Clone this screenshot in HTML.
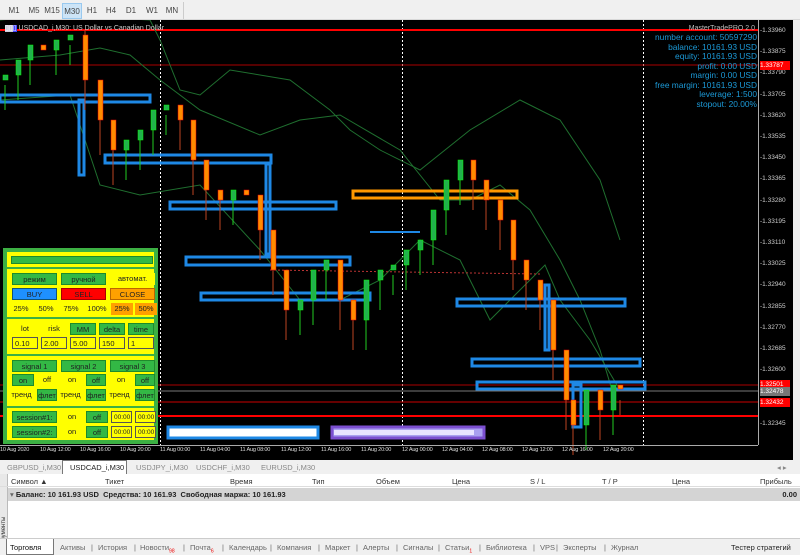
<!DOCTYPE html>
<html><head><meta charset="utf-8"><style>
*{margin:0;padding:0;box-sizing:border-box}
body{width:800px;height:555px;overflow:hidden;background:#f0f0f0;font-family:"Liberation Sans",sans-serif;position:relative}
.tb{position:absolute;left:0;top:0;width:800px;height:20px;background:#f0f0f0;border-bottom:1px solid #d8d8d8}
.tb span{position:absolute;top:3px;height:16px;font-size:8px;color:#444;line-height:16px;text-align:center;width:20px}
.tb .on{background:#cce4f7;border:1px solid #99c9ef}
.chart{position:absolute;left:0;top:20px;width:793px;height:440px;background:#000}
.p{position:absolute;font-size:8px;line-height:9px}
.btn{position:absolute;font-size:7.5px;text-align:center;color:#222;line-height:11px;height:12px}
.g{background:#33b845;border:1px solid #1e8a2c}
.y{background:#ffff00}
.inp{background:#ffff00;border:1px solid #555;text-align:left;padding-left:2px}
.ab{position:absolute;top:0}
.tl span{position:absolute;top:0}
</style></head><body>
<div class="tb">
<span style="left:4px">M1</span><span style="left:24px">M5</span><span style="left:42px">M15</span><span class="on" style="left:62px">M30</span><span style="left:82px">H1</span><span style="left:101px">H4</span><span style="left:121px">D1</span><span style="left:142px">W1</span><span style="left:162px">MN</span>
<div style="position:absolute;left:183px;top:2px;width:1px;height:17px;background:#ccc"></div>
</div>
<div class="chart">
<svg width="793" height="440" style="position:absolute;left:0;top:0">
<g stroke="#fff" stroke-dasharray="2,2" stroke-width="1"><line x1="160.5" y1="0" x2="160.5" y2="425"/><line x1="402.5" y1="0" x2="402.5" y2="425"/><line x1="643.5" y1="0" x2="643.5" y2="425"/></g>
<line x1="0" y1="10" x2="758" y2="10" stroke="#f00" stroke-width="2"/>
<line x1="0" y1="45" x2="758" y2="45" stroke="#a00" stroke-width="1"/>
<line x1="0" y1="365" x2="758" y2="365" stroke="#a00"/>
<line x1="0" y1="371" x2="758" y2="371" stroke="#777"/>
<line x1="0" y1="382" x2="758" y2="382" stroke="#c00"/>
<line x1="0" y1="396" x2="758" y2="396" stroke="#f00" stroke-width="2"/>
<g fill="none" stroke="#1f6f2f" stroke-width="1">
<polyline points="0,0 60,-5 150,0 160,20 180,70 200,75 230,50 290,60 330,90 350,110 380,130 420,150 470,110 520,80 560,100 600,160 620,220"/>
<polyline points="0,40 60,35 100,28 130,35 160,60 200,90 260,115 300,100 340,95 400,130 440,180 470,180 500,165 530,190 560,240 580,280 600,330 615,380"/>
<polyline points="0,80 70,75 100,165 140,175 200,165 260,230 300,280 340,280 380,260 420,220 460,240 490,300 520,270 545,245 560,280 590,320 620,370"/>
</g>
<line x1="270" y1="250" x2="540" y2="254" stroke="#b33" stroke-dasharray="2,2"/>
<g fill="none" stroke="#1e88e5" stroke-width="3">
<rect x="0" y="75" width="150" height="7"/><rect x="79" y="80" width="5" height="75"/>
<rect x="105" y="135" width="166" height="8"/><rect x="170" y="182" width="166" height="7"/>
<rect x="186" y="237" width="164" height="8"/><rect x="201" y="273" width="169" height="7"/>
<rect x="457" y="279" width="168" height="7"/><rect x="472" y="339" width="168" height="7"/>
<rect x="477" y="362" width="168" height="7"/><rect x="573" y="365" width="8" height="42"/>
<rect x="266" y="144" width="4" height="90"/><rect x="545" y="265" width="4" height="65"/>
</g>
<line x1="370" y1="212" x2="420" y2="212" stroke="#1e88e5" stroke-width="2"/>
<rect x="353" y="171" width="164" height="7" fill="none" stroke="#ff9800" stroke-width="3"/>
<g stroke="#b42" stroke-width="1"><path d="M85 10V90M100 60V135M113 110V165M180 95V130M193 110V175M206 150V200M220 180V210M260 185V240M273 220V275M286 260V320M340 250V310M353 290V330M473 150V190M486 170V210M500 190V230M513 210V270M526 250V290M540 270V310M553 290V360M566 340V410M573 390V435M600 380V420M620 380V395"/></g>
<g stroke="#2c2" stroke-width="1"><path d="M5 65V90M18 50V80M30 35V65M56 30V55M70 25V45M126 130V160M140 120V150M153 100V135M166 95V115M233 180V205M300 290V315M313 260V305M326 250V280M366 270V330M380 260V290M393 255V275M406 240V270M420 230V255M433 200V245M446 170V215M460 150V185M586 375V430M613 375V415"/></g>
<g fill="#22b14c" stroke="#0f0" stroke-width=".5">
<rect x="3" y="55" width="5" height="5"/><rect x="16" y="40" width="5" height="15"/><rect x="28" y="25" width="5" height="15"/><rect x="54" y="20" width="5" height="10"/><rect x="68" y="15" width="5" height="5"/>
<rect x="124" y="120" width="5" height="10"/><rect x="138" y="110" width="5" height="10"/><rect x="151" y="90" width="5" height="20"/><rect x="164" y="85" width="5" height="5"/><rect x="231" y="170" width="5" height="10"/>
<rect x="298" y="280" width="5" height="10"/><rect x="311" y="250" width="5" height="30"/><rect x="324" y="240" width="5" height="10"/><rect x="364" y="260" width="5" height="40"/><rect x="378" y="250" width="5" height="10"/><rect x="391" y="245" width="5" height="5"/><rect x="404" y="230" width="5" height="15"/><rect x="418" y="220" width="5" height="10"/><rect x="431" y="190" width="5" height="30"/><rect x="444" y="160" width="5" height="30"/><rect x="458" y="140" width="5" height="20"/>
<rect x="584" y="370" width="5" height="35"/><rect x="611" y="365" width="5" height="25"/>
</g>
<g fill="#ff8c00" stroke="#e00" stroke-width=".5">
<rect x="41" y="25" width="5" height="5"/><rect x="83" y="15" width="5" height="45"/><rect x="98" y="60" width="5" height="40"/><rect x="111" y="100" width="5" height="30"/>
<rect x="178" y="85" width="5" height="15"/><rect x="191" y="100" width="5" height="40"/><rect x="204" y="140" width="5" height="30"/><rect x="218" y="170" width="5" height="10"/><rect x="244" y="170" width="5" height="5"/><rect x="258" y="175" width="5" height="35"/><rect x="271" y="210" width="5" height="40"/><rect x="284" y="250" width="5" height="40"/>
<rect x="338" y="240" width="5" height="40"/><rect x="351" y="280" width="5" height="20"/>
<rect x="471" y="140" width="5" height="20"/><rect x="484" y="160" width="5" height="20"/><rect x="498" y="180" width="5" height="20"/><rect x="511" y="200" width="5" height="40"/><rect x="524" y="240" width="5" height="20"/><rect x="538" y="260" width="5" height="20"/><rect x="551" y="280" width="5" height="50"/><rect x="564" y="330" width="5" height="50"/><rect x="571" y="380" width="5" height="25"/><rect x="598" y="370" width="5" height="20"/><rect x="618" y="365" width="5" height="4"/>
</g>
<rect x="168" y="407" width="150" height="11" fill="#fff" stroke="#1e88e5" stroke-width="3"/>
<rect x="332" y="407" width="152" height="11" fill="#a9a0f0" stroke="#7b4fd0" stroke-width="3"/>
<rect x="334" y="410" width="140" height="5" fill="#e8e4ff"/>
<line x1="758.5" y1="0" x2="758.5" y2="425" stroke="#aaa"/>
<line x1="0" y1="425.5" x2="758" y2="425.5" stroke="#aaa"/>
</svg>
<div class="p" style="left:5px;top:4px;color:#ccc;font-size:7px"><span style="background:#ccd;color:#fff">▯▯</span><span style="background:#44f;color:#fff">▯</span> USDCAD_i,M30: US Dollar vs Canadian Dollar</div>
<div class="p" style="right:38px;top:4px;color:#bbb;font-size:7px">MasterTradePRO 2.0</div>
<div style="position:absolute;right:36px;top:13px;text-align:right;color:#1c9ad8;font-size:8.4px;line-height:9.5px">number account: 50597290<br>balance: 10161.93 USD<br>equity: 10161.93 USD<br>profit: 0.00 USD<br>margin: 0.00 USD<br>free margin: 10161.93 USD<br>leverage: 1:500<br>stopout: 20.00%</div>
<div style="position:absolute;left:760px;top:0;color:#ccc;font-size:6.5px;line-height:21.2px">-1.33960<br>-1.33875<br>-1.33790<br>-1.33705<br>-1.33620<br>-1.33535<br>-1.33450<br>-1.33365<br>-1.33280<br>-1.33195<br>-1.33110<br>-1.33025<br>-1.32940<br>-1.32855<br>-1.32770<br>-1.32685<br>-1.32600<br>-1.32515</div>
<div class="p" style="left:760px;top:41px;background:#f00;color:#fff;font-size:6.5px;width:30px">1.33787</div>
<div class="p" style="left:760px;top:360px;background:#f00;color:#fff;font-size:6.5px;width:30px">1.32501</div>
<div class="p" style="left:760px;top:367px;background:#777;color:#fff;font-size:6.5px;width:30px">1.32478</div>
<div class="p" style="left:760px;top:378px;background:#f00;color:#fff;font-size:6.5px;width:30px">1.32432</div>
<div class="p" style="left:760px;top:399px;color:#ccc;font-size:6.5px">-1.32345</div>
<div class="tl" style="position:absolute;left:0;top:427px;color:#ddd;font-size:5.6px;white-space:nowrap;letter-spacing:-0.2px">
<span style="left:0">10 Aug 2020</span><span style="left:40px">10 Aug 12:00</span><span style="left:80px">10 Aug 16:00</span><span style="left:120px">10 Aug 20:00</span><span style="left:160px">11 Aug 00:00</span><span style="left:200px">11 Aug 04:00</span><span style="left:240px">11 Aug 08:00</span><span style="left:281px">11 Aug 12:00</span><span style="left:321px">11 Aug 16:00</span><span style="left:361px">11 Aug 20:00</span><span style="left:402px">12 Aug 00:00</span><span style="left:442px">12 Aug 04:00</span><span style="left:482px">12 Aug 08:00</span><span style="left:522px">12 Aug 12:00</span><span style="left:562px">12 Aug 16:00</span><span style="left:603px">12 Aug 20:00</span></div>
</div>
<div style="position:absolute;left:3px;top:248px;width:155px;height:196px;background:#ffff00;border:4px solid #3cb043">
<div style="position:absolute;left:4px;top:4px;width:142px;height:8px;background:#33b845;border:1px solid #1e8a2c"></div>
<div style="position:absolute;left:-1px;top:15px;width:149px;height:2px;background:#3cb043"></div>
<div class="btn g" style="left:5px;top:21px;width:45px">режим</div><div class="btn g" style="left:54px;top:21px;width:45px">ручной</div><div class="btn y" style="left:103px;top:21px;width:45px">автомат.</div>
<div class="btn" style="left:5px;top:36px;width:45px;background:#1e90ff;border:1px solid #157">BUY</div><div class="btn" style="left:54px;top:36px;width:45px;background:#f00;border:1px solid #a00">SELL</div><div class="btn" style="left:103px;top:36px;width:45px;background:#ffa000;border:1px solid #b60">CLOSE</div>
<div class="btn y" style="left:3px;top:51px;width:22px">25%</div><div class="btn y" style="left:28px;top:51px;width:22px">50%</div><div class="btn y" style="left:53px;top:51px;width:22px">75%</div><div class="btn y" style="left:78px;top:51px;width:24px">100%</div><div class="btn" style="left:104px;top:51px;width:22px;background:#ffa000">25%</div><div class="btn" style="left:128px;top:51px;width:22px;background:#ffa000">50%</div>
<div style="position:absolute;left:-1px;top:65px;width:149px;height:2px;background:#3cb043"></div>
<div class="btn y" style="left:5px;top:71px;width:26px">lot</div><div class="btn y" style="left:34px;top:71px;width:26px">risk</div><div class="btn g" style="left:63px;top:71px;width:26px">MM</div><div class="btn g" style="left:92px;top:71px;width:26px">delta</div><div class="btn g" style="left:121px;top:71px;width:26px">time</div>
<div class="btn inp" style="left:5px;top:85px;width:26px">0.10</div><div class="btn inp" style="left:34px;top:85px;width:26px">2.00</div><div class="btn inp" style="left:63px;top:85px;width:26px">5.00</div><div class="btn inp" style="left:92px;top:85px;width:26px">150</div><div class="btn inp" style="left:121px;top:85px;width:26px">1</div>
<div style="position:absolute;left:-1px;top:102px;width:149px;height:2px;background:#3cb043"></div>
<div class="btn g" style="left:5px;top:108px;width:45px">signal 1</div><div class="btn g" style="left:54px;top:108px;width:45px">signal 2</div><div class="btn g" style="left:103px;top:108px;width:45px">signal 3</div>
<div class="btn g" style="left:5px;top:122px;width:22px">on</div><div class="btn y" style="left:30px;top:122px;width:20px">off</div><div class="btn y" style="left:54px;top:122px;width:22px">on</div><div class="btn g" style="left:79px;top:122px;width:20px">off</div><div class="btn y" style="left:103px;top:122px;width:22px">on</div><div class="btn g" style="left:128px;top:122px;width:20px">off</div>
<div class="btn y" style="left:2px;top:137px;width:25px">тренд</div><div class="btn g" style="left:30px;top:137px;width:20px">флет</div><div class="btn y" style="left:51px;top:137px;width:25px">тренд</div><div class="btn g" style="left:79px;top:137px;width:20px">флет</div><div class="btn y" style="left:100px;top:137px;width:25px">тренд</div><div class="btn g" style="left:128px;top:137px;width:20px">флет</div>
<div style="position:absolute;left:-1px;top:154px;width:149px;height:2px;background:#3cb043"></div>
<div class="btn g" style="left:5px;top:159px;width:45px">session#1:</div><div class="btn y" style="left:55px;top:159px;width:20px">on</div><div class="btn g" style="left:79px;top:159px;width:22px">off</div><div class="btn inp" style="left:104px;top:159px;width:21px;font-size:6.5px">00:00</div><div class="btn inp" style="left:128px;top:159px;width:21px;font-size:6.5px">00:00</div>
<div class="btn g" style="left:5px;top:174px;width:45px">session#2:</div><div class="btn y" style="left:55px;top:174px;width:20px">on</div><div class="btn g" style="left:79px;top:174px;width:22px">off</div><div class="btn inp" style="left:104px;top:174px;width:21px;font-size:6.5px">00:00</div><div class="btn inp" style="left:128px;top:174px;width:21px;font-size:6.5px">00:00</div>
</div>
<div style="position:absolute;left:0;top:460px;width:800px;height:14px;background:#f0f0f0;font-size:7.5px;color:#888;white-space:nowrap">
<span class="ab" style="left:7px;top:3px">GBPUSD_i,M30</span>
<span class="ab" style="left:62px;top:0;height:14px;width:65px;background:#fff;border:1px solid #777;border-bottom:none"></span>
<span class="ab" style="left:70px;top:3px;color:#222">USDCAD_i,M30</span>
<span class="ab" style="left:136px;top:3px">USDJPY_i,M30</span>
<span class="ab" style="left:196px;top:3px">USDCHF_i,M30</span>
<span class="ab" style="left:261px;top:3px">EURUSD_i,M30</span>
<span class="ab" style="left:777px;top:3px">◂ ▸</span>
</div>
<div style="position:absolute;left:0;top:474px;width:8px;height:64px;background:#e8e8e8;border-right:1px solid #bbb"></div>
<div style="position:absolute;left:0;top:480px;width:8px;height:74px;font-size:6px;color:#333;writing-mode:vertical-rl;transform:rotate(180deg);line-height:8px">Инструменты</div>
<div style="position:absolute;left:8px;top:474px;width:792px;height:64px;background:#fff"></div>
<div style="position:absolute;left:0;top:474px;width:800px;height:13px;border-bottom:1px solid #ddd;font-size:7.5px;color:#333;white-space:nowrap">
<span class="ab" style="left:11px;top:3px">Символ ▲</span><span class="ab" style="left:105px;top:3px">Тикет</span><span class="ab" style="left:230px;top:3px">Время</span><span class="ab" style="left:312px;top:3px">Тип</span><span class="ab" style="left:376px;top:3px">Объем</span><span class="ab" style="left:452px;top:3px">Цена</span><span class="ab" style="left:530px;top:3px">S / L</span><span class="ab" style="left:602px;top:3px">T / P</span><span class="ab" style="left:672px;top:3px">Цена</span><span class="ab" style="left:760px;top:3px">Прибыль</span>
</div>
<div style="position:absolute;left:8px;top:488px;width:792px;height:13px;background:#d4d4d4;font-size:7.5px;font-weight:bold;color:#222;line-height:13px;white-space:nowrap"><span style="padding-left:2px;color:#666;font-weight:normal">▾</span> Баланс: 10 161.93 USD&nbsp; Средства: 10 161.93&nbsp; Свободная маржа: 10 161.93<span style="position:absolute;right:3px">0.00</span></div>
<div style="position:absolute;left:0;top:538px;width:800px;height:17px;background:#f0f0f0;border-top:1px solid #ccc;font-size:7.5px;color:#666;white-space:nowrap">
<span class="ab" style="left:6px;top:0;width:48px;height:16px;background:#fff;border:1px solid #777;border-top:none"></span>
<span class="ab" style="left:10px;top:4px;color:#111">Торговля</span>
<span class="ab" style="left:60px;top:4px">Активы</span><span class="ab" style="left:91px;top:4px">|</span>
<span class="ab" style="left:98px;top:4px">История</span><span class="ab" style="left:134px;top:4px">|</span>
<span class="ab" style="left:140px;top:4px">Новости<sub style="color:#e00;font-size:5px">98</sub></span><span class="ab" style="left:183px;top:4px">|</span>
<span class="ab" style="left:190px;top:4px">Почта<sub style="color:#e00;font-size:5px">6</sub></span><span class="ab" style="left:222px;top:4px">|</span>
<span class="ab" style="left:229px;top:4px">Календарь</span><span class="ab" style="left:270px;top:4px">|</span>
<span class="ab" style="left:277px;top:4px">Компания</span><span class="ab" style="left:318px;top:4px">|</span>
<span class="ab" style="left:325px;top:4px">Маркет</span><span class="ab" style="left:356px;top:4px">|</span>
<span class="ab" style="left:363px;top:4px">Алерты</span><span class="ab" style="left:396px;top:4px">|</span>
<span class="ab" style="left:403px;top:4px">Сигналы</span><span class="ab" style="left:438px;top:4px">|</span>
<span class="ab" style="left:445px;top:4px">Статьи<sub style="color:#e00;font-size:5px">1</sub></span><span class="ab" style="left:479px;top:4px">|</span>
<span class="ab" style="left:486px;top:4px">Библиотека</span><span class="ab" style="left:533px;top:4px">|</span>
<span class="ab" style="left:540px;top:4px">VPS</span><span class="ab" style="left:556px;top:4px">|</span>
<span class="ab" style="left:563px;top:4px">Эксперты</span><span class="ab" style="left:604px;top:4px">|</span>
<span class="ab" style="left:611px;top:4px">Журнал</span>
<span class="ab" style="left:731px;top:4px;color:#222">Тестер стратегий</span>
</div>
</body></html>
